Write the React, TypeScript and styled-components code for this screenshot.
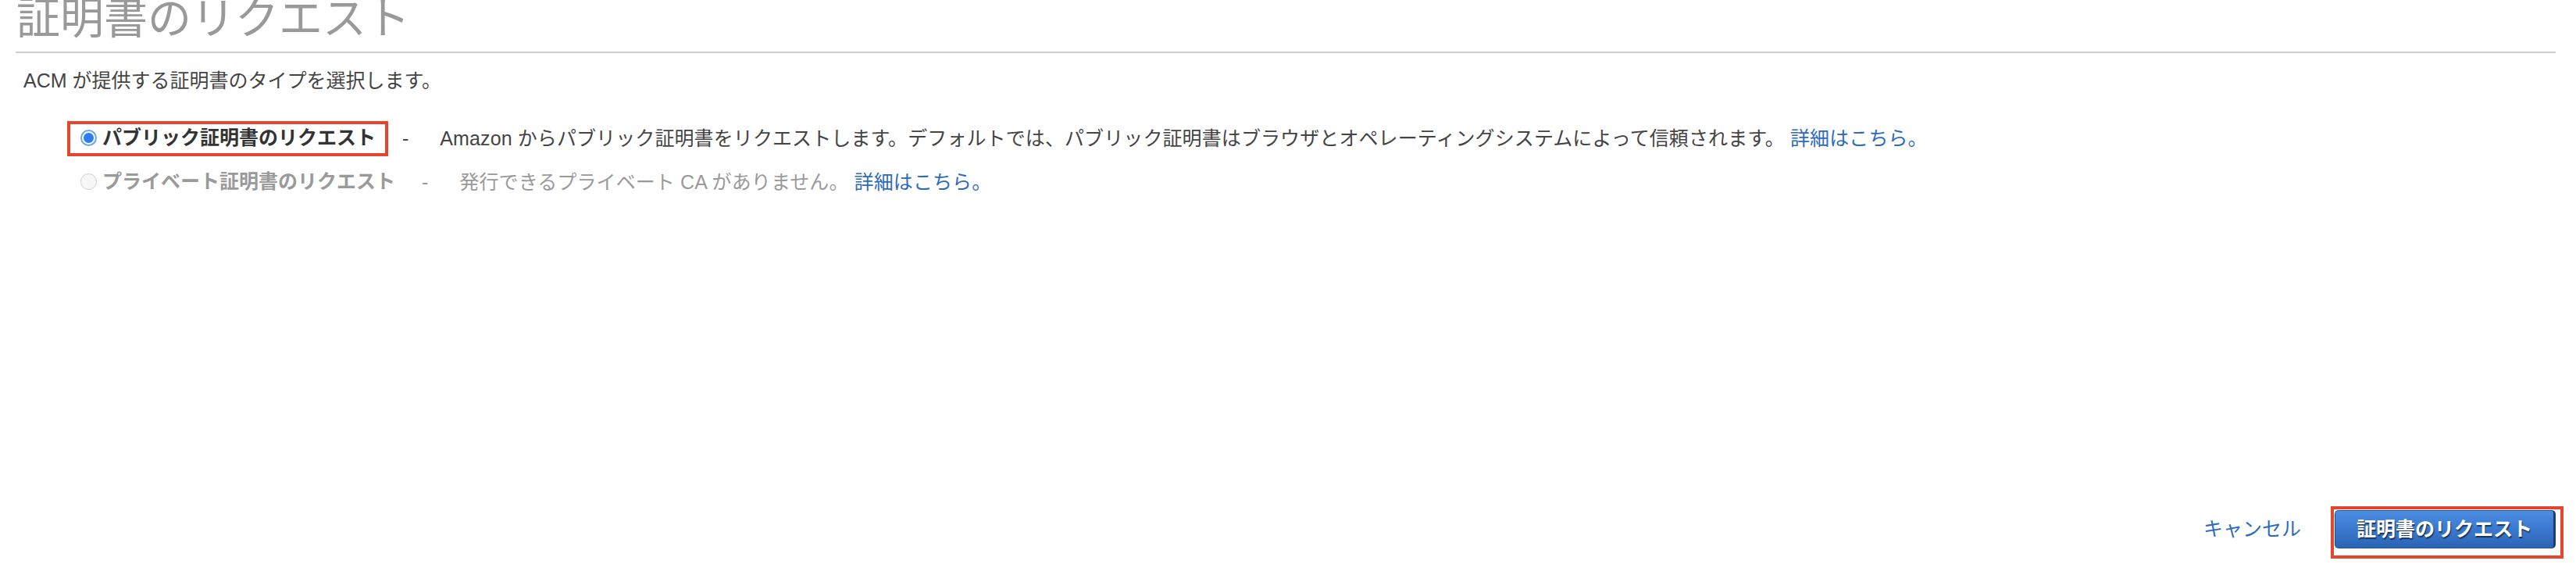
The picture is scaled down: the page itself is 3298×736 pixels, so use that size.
import styled, { createGlobalStyle } from "styled-components";

const GlobalStyle = createGlobalStyle`
  html, body {
    margin: 0;
    padding: 0;
    background: #ffffff;
  }
  body {
    font-family: "Liberation Sans", "Noto Sans CJK JP", sans-serif;
    color: #444;
  }
`;

const options = [
  {
    id: "public",
    label: "パブリック証明書のリクエスト",
    desc: "Amazon からパブリック証明書をリクエストします。デフォルトでは、パブリック証明書はブラウザとオペレーティングシステムによって信頼されます。",
    disabled: false,
    highlight: true,
  },
  {
    id: "private",
    label: "プライベート証明書のリクエスト",
    desc: "発行できるプライベート CA がありません。",
    disabled: true,
    highlight: false,
  },
];

const App = () => {
  return (
    <>
      <GlobalStyle />
      <Page>
        <Header>
          <Title>証明書のリクエスト</Title>
        </Header>

        <Intro>ACM が提供する証明書のタイプを選択します。</Intro>

        <OptionList>
          {options.map((opt) => (
            <OptionRow key={opt.id}>
              <Choice highlight={opt.highlight}>
                <Radio
                  type="radio"
                  name="certType"
                  defaultChecked={!opt.disabled}
                  disabled={opt.disabled}
                />
                <ChoiceLabel disabled={opt.disabled}>{opt.label}</ChoiceLabel>
              </Choice>
              <Dash disabled={opt.disabled}>-</Dash>
              <Description disabled={opt.disabled}>
                {opt.desc} <Link href="#">詳細はこちら。</Link>
              </Description>
            </OptionRow>
          ))}
        </OptionList>

        <Footer>
          <CancelLink href="#">キャンセル</CancelLink>
          <Highlighted>
            <PrimaryButton>証明書のリクエスト</PrimaryButton>
          </Highlighted>
        </Footer>
      </Page>
    </>
  );
};

export default App;

const Page = styled.div`
  display: flex;
  flex-direction: column;
  height: 736px;
  box-sizing: border-box;
  overflow: hidden;
`;

const Header = styled.div`
  margin: 0 26px 0 20px;
  padding-bottom: 14px;
  border-bottom: 2px solid #cccccc;
`;

const Title = styled.h1`
  margin: -4px 0 0 1px;
  font-size: 56px;
  line-height: 56px;
  font-weight: normal;
  color: #999999;
  white-space: nowrap;
`;

const Intro = styled.p`
  margin: 18px 0 0 30px;
  font-size: 25px;
  line-height: 34px;
  color: #444;
`;

const OptionList = styled.div`
  display: flex;
  flex-direction: column;
  gap: 19px;
  margin-top: 39px;
  padding-left: 90px;
`;

const OptionRow = styled.div`
  display: flex;
  align-items: center;
  font-size: 25px;
  line-height: 29px;
  white-space: nowrap;
`;

const Choice = styled.label<{ highlight?: boolean }>`
  display: flex;
  align-items: center;
  padding: 3px 12px 5px 13px;
  outline: ${(p) => (p.highlight ? "4px solid #e5452c" : "none")};
`;

const Radio = styled.input`
  appearance: none;
  -webkit-appearance: none;
  margin: 0 7px 0 0;
  width: 21px;
  height: 21px;
  border-radius: 50%;
  box-sizing: border-box;
  border: 2px solid #6aa5f7;
  background: #fff;
  flex-shrink: 0;

  &:checked {
    background: radial-gradient(circle, #2f7bf5 0 5.5px, #3d86f6 6px, #fff 7px);
  }

  &:disabled {
    border: 1.5px solid #cfcfcf;
    background: #f7f7f7;
  }
`;

const ChoiceLabel = styled.span<{ disabled?: boolean }>`
  font-weight: bold;
  color: ${(p) => (p.disabled ? "#9a9a9a" : "#333333")};
`;

const Dash = styled.span<{ disabled?: boolean }>`
  margin: 0 40px 0 22px;
  color: ${(p) => (p.disabled ? "#9a9a9a" : "#444")};
`;

const Description = styled.span<{ disabled?: boolean }>`
  letter-spacing: 0.1px;
  color: ${(p) => (p.disabled ? "#9a9a9a" : "#444")};
`;

const Link = styled.a`
  color: #2d6bbf;
  text-decoration: none;
`;

const Footer = styled.div`
  display: flex;
  align-items: flex-start;
  justify-content: flex-end;
  gap: 42px;
  margin-top: auto;
  padding: 0 20px 25px 0;
`;

const CancelLink = styled.a`
  margin-top: 1px;
  font-size: 25px;
  line-height: 49px;
  color: #2d6bbf;
  text-decoration: none;
`;

const Highlighted = styled.div`
  display: flex;
  padding: 1px 6px 9px 1px;
  outline: 4px solid #e5452c;
`;

const PrimaryButton = styled.button`
  height: 49px;
  padding: 0 27px;
  border: 1px solid #23508f;
  border-right-width: 3px;
  border-right-color: #1d3f70;
  border-radius: 5px;
  background: linear-gradient(to bottom, #4b8ee2 0%, #3a78cf 50%, #2c64b3 100%);
  color: #ffffff;
  font-family: "Liberation Sans", "Noto Sans CJK JP", sans-serif;
  font-size: 25px;
  font-weight: bold;
  line-height: 47px;
  text-shadow: 1px 2px 1px rgba(0, 0, 0, 0.55);
  white-space: nowrap;
  cursor: pointer;
`;
